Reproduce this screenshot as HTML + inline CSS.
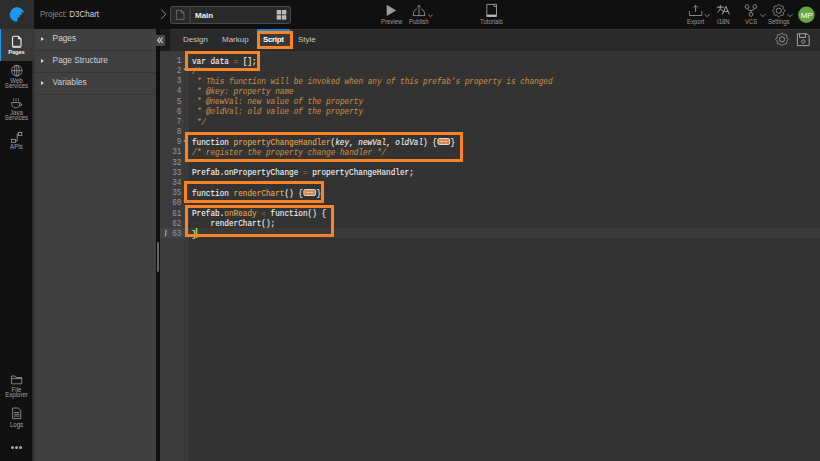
<!DOCTYPE html>
<html><head><meta charset="utf-8">
<style>
*{margin:0;padding:0;box-sizing:border-box}
html,body{width:820px;height:461px;overflow:hidden;background:#101010;font-family:"Liberation Sans",sans-serif;position:relative}
.a{position:absolute}
#top{left:0;top:0;width:820px;height:29px;background:#101010}
#side{left:0;top:0;width:33px;height:461px;background:#111111}
#logo{left:0;top:0;width:34px;height:29px;background:#2d2d2d}
#pagesItem{left:0;top:29px;width:34px;height:32px;background:#3a3a3a;border-left:1px solid #1a9cf0}
#panel{left:34px;top:29px;width:122px;height:432px;background:#404040;border-left:1px solid #3a3a3a}
#pedge{left:32px;top:61px;width:2px;height:400px;background:#2e2e2e}
.pi{position:absolute;left:0;width:122px;height:22px;border-bottom:1px solid #363636;color:#d2d2d2;font-size:8.3px}
.pi span.t{position:absolute;left:17.6px;top:4.2px;white-space:nowrap}
.pi span.tri{position:absolute;left:6px;top:8.3px;width:0;height:0;border-left:3.6px solid #d6d6d6;border-top:2.4px solid transparent;border-bottom:2.4px solid transparent}
#strip{left:156px;top:29px;width:4px;height:432px;background:#0f0f0f}
#handle{left:157px;top:242px;width:2px;height:30px;background:#666;border-radius:1px}
#collapse{left:156px;top:35px;width:9px;height:10.5px;background:#474747;z-index:5}
#tabbar{left:160px;top:29px;width:660px;height:22px;background:#2a2a2a;border-top:1px solid #363636}
#tabdark{left:160px;top:29px;width:10px;height:22px;background:#1b1b1b}
#code{left:160px;top:51px;width:660px;height:410px;background:#333333}
#gutter{left:160px;top:51px;width:29px;height:410px;background:#3b3b3b;border-right:0}
#gline{left:189px;top:51px;width:1px;height:410px;background:#303030}
.tab{position:absolute;top:35px;font-size:8px;color:#c8c8c8}
.lbl{position:absolute;font-size:6.8px;color:#9a9a9a;white-space:nowrap;transform:scaleX(0.88);transform-origin:left top}
.slbl{position:absolute;font-size:6.6px;color:#a2a2a2;text-align:center;width:33px;left:0;line-height:5.6px;transform:scaleX(0.92)}
.ln{position:absolute;left:150px;width:31.5px;text-align:right;font-family:"Liberation Mono",monospace;font-size:8.5px;line-height:10.2px;color:#8f9aa6;transform:scaleX(0.9078);transform-origin:right top}
.cl{-webkit-text-stroke:0.08px currentColor;position:absolute;left:191.5px;font-family:"Liberation Mono",monospace;font-size:8.5px;line-height:10.2px;color:#f8f8f8;white-space:pre;transform:scaleX(0.9057);transform-origin:left top}
.c{color:#c48a45;font-style:italic}
.o{color:#b06a2c}
.f{color:#e8a850}
.i{font-style:italic}
.box{position:absolute;border:3px solid #fb8326}
.ws{color:#474747;font-style:normal;-webkit-text-stroke:0}
.fold{display:inline-block;position:relative;width:15px;height:8px;vertical-align:-1px}
.fold span{position:absolute;left:0.8px;top:0;width:13.6px;height:7.4px;background:#cf8a4e;border:1px solid #e0e0e0;border-radius:2px}
.fold svg{position:absolute;left:1px;top:0.5px}
.cur{position:absolute;left:4.3px;top:-1.8px;width:2px;height:10.3px;background:#7fd320}
</style></head><body>
<div class="a" id="top"></div>
<div class="a" id="side"></div>
<div class="a" id="logo"></div>
<div class="a" id="pagesItem"></div>
<div class="a" id="pedge"></div>
<div class="a" id="panel">
  <div class="pi" style="top:0"><span class="tri"></span><span class="t">Pages</span></div>
  <div class="pi" style="top:22px"><span class="tri"></span><span class="t">Page Structure</span></div>
  <div class="pi" style="top:44px"><span class="tri"></span><span class="t">Variables</span></div>
</div>
<div class="a" id="strip"></div>
<div class="a" id="handle"></div>
<div class="a" id="collapse"></div>
<div class="a" id="tabbar"></div>
<div class="a" id="tabdark"></div>
<div class="a" id="code"></div>
<div class="a" id="gutter"></div>
<div class="a" id="gline"></div>

<!-- top bar text -->
<div class="a" style="left:40px;top:9px;font-size:8.5px;color:#8a8a8a;white-space:nowrap;transform:scaleX(0.94);transform-origin:left top">Project: <span style="color:#d6d6d6">D3Chart</span></div>


<!-- SIDEBAR ICONS -->
<svg class="a" style="left:0;top:0" width="33" height="29" viewBox="0 0 33 29">
  <path d="M16.8 21.8 A7.3 7.3 0 1 1 24 12.2 L20.9 13.1 Q21.8 13.6 22.1 14.5 L19.3 15.5 Q20 16 20.1 16.8 L17.4 17.9 Q18.6 19.5 16.8 21.8 Z" fill="#1d96ef"/>
</svg>
<svg class="a" style="left:0;top:29px" width="33" height="32" viewBox="0 0 33 32">
  <path d="M14 7.3 H18.3 L21 10 V16.6 Q21 18 19.7 18 H13.8 Q12.5 18 12.5 16.6 V8.8 Q12.5 7.3 14 7.3 Z" fill="none" stroke="#e8eef4" stroke-width="1.1"/>
  <path d="M18.3 7.3 V10 H21 Z" fill="#e8eef4" stroke="#e8eef4" stroke-width="0.6"/>
  <rect x="12.3" y="16.7" width="8.9" height="2" rx="0.8" fill="#c9d2da"/>
</svg>
<div class="slbl" style="top:48.6px;color:#f2f2f2;font-size:6.2px;font-weight:bold;letter-spacing:-0.1px">Pages</div>
<svg class="a" style="left:0;top:62px" width="33" height="16" viewBox="0 0 33 16">
  <g fill="none" stroke="#9d9d9d" stroke-width="0.8">
   <circle cx="16.8" cy="8.7" r="5.3"/>
   <ellipse cx="16.8" cy="8.7" rx="2.4" ry="5.3"/>
   <line x1="16.8" y1="3.4" x2="16.8" y2="14"/>
   <line x1="11.5" y1="8.7" x2="22.1" y2="8.7"/>
  </g>
</svg>
<div class="slbl" style="top:77.6px">Web<br>Services</div>
<svg class="a" style="left:0;top:96px" width="33" height="14" viewBox="0 0 33 14">
  <g fill="none" stroke="#a0a0a0" stroke-width="0.8">
   <path d="M13.6 2.2 V5.3 M16 2 V5.3 M18.4 2.2 V5.3" stroke-width="0.7"/>
   <path d="M11.5 6.5 H20 Q20 11.8 15.7 11.8 Q11.5 11.8 11.5 6.5 Z"/>
   <path d="M20 7.5 Q22.2 7.6 21.5 9.3 Q20.8 10.2 19.3 10"/>
  </g>
</svg>
<div class="slbl" style="top:109.5px">Java<br>Services</div>
<svg class="a" style="left:0;top:130px" width="33" height="14" viewBox="0 0 33 14">
  <g fill="none" stroke="#a3a3a3" stroke-width="0.8">
   <rect x="18.4" y="2.4" width="3.4" height="3"/>
   <rect x="11.4" y="9.3" width="4.2" height="3"/>
   <path d="M18.4 4 H17.2 V11 H15.6"/>
  </g>
</svg>
<div class="slbl" style="top:144.2px">APIs</div>
<svg class="a" style="left:0;top:373px" width="33" height="13" viewBox="0 0 33 13">
  <g fill="none" stroke="#a0a0a0" stroke-width="0.8">
   <path d="M11.4 3 H15 L16 4.5 H21.7 V10.8 H11.4 Z"/>
   <path d="M11.4 5.6 H21.7"/>
  </g>
</svg>
<div class="slbl" style="top:386.6px">File<br>Explorer</div>
<svg class="a" style="left:0;top:406px" width="33" height="14" viewBox="0 0 33 14">
  <g fill="none" stroke="#a0a0a0" stroke-width="0.8">
   <path d="M12.6 2 H18.2 L20.8 4.6 V12.6 H12.6 Z"/>
   <path d="M14 6.5 H19.4 M14 8.3 H19.4 M14 10.1 H19.4"/>
  </g>
</svg>
<div class="slbl" style="top:421.6px">Logs</div>
<svg class="a" style="left:0;top:444px" width="33" height="7" viewBox="0 0 33 7">
  <g fill="#a8acb0"><circle cx="12.5" cy="3.5" r="1.5"/><circle cx="16.5" cy="3.5" r="1.5"/><circle cx="20.5" cy="3.5" r="1.5"/></g>
</svg>

<!-- TOP BAR ICONS -->
<svg class="a" style="left:155px;top:0" width="140" height="29" viewBox="0 0 140 29">
  <path d="M6.3 9.6 L10.8 14.2 L6.3 18.8" fill="none" stroke="#8c8c8c" stroke-width="1"/>
  <rect x="15.5" y="6.5" width="120" height="17" rx="2" fill="#2a2a2a" stroke="#4a4a4a" stroke-width="1"/>
  <line x1="35" y1="6.5" x2="35" y2="23.5" stroke="#4a4a4a" stroke-width="1"/>
  <path d="M21.4 10.3 H26.4 L29 12.9 V19.4 H21.4 Z" fill="none" stroke="#777" stroke-width="0.8"/>
  <path d="M26.4 10.3 V12.9 H29" fill="none" stroke="#777" stroke-width="0.8"/>
  <rect x="121.7" y="10" width="4.4" height="4.4" fill="#bdbdbd"/>
  <rect x="126.9" y="10" width="4.4" height="4.4" fill="#bdbdbd"/>
  <rect x="121.7" y="15.2" width="4.4" height="4.4" fill="#bdbdbd"/>
  <rect x="126.9" y="15.2" width="4.4" height="4.4" fill="#bdbdbd"/>
</svg>
<div class="a" style="left:195px;top:10.5px;font-size:8px;font-weight:bold;color:#f0f0f0">Main</div>

<svg class="a" style="left:375px;top:0" width="70" height="29" viewBox="0 0 70 29">
  <path d="M11.7 4.8 L21.2 10.5 L11.7 16.1 Z" fill="#9a9a9a"/>
  <g fill="none" stroke="#a0a0a0" stroke-width="0.8">
    <path d="M38.2 15.6 Q38.4 9.6 41.8 8.9 M46.2 8.9 Q49.6 9.6 49.8 15.6 M37.8 15.6 H50.2"/>
    <path d="M44 5.4 V15.6 M42.2 7.2 L44 5.4 L45.8 7.2"/>
    <path d="M53.3 14.5 L55.5 16.7 L57.7 14.5"/>
  </g>
</svg>
<div class="lbl" style="left:380.5px;top:18px">Preview</div>
<div class="lbl" style="left:409px;top:18px">Publish</div>

<svg class="a" style="left:470px;top:0" width="40" height="29" viewBox="0 0 40 29">
  <g fill="none" stroke="#a0a0a0" stroke-width="0.9">
    <path d="M16.8 4.4 H26.5 V16.5 H16.8 Z"/>
    <path d="M24 4.4 V6.5 L26.5 6.5"/>
  </g>
  <rect x="16.8" y="14.6" width="9.7" height="2.2" fill="#b8b8b8"/>
</svg>
<div class="lbl" style="left:479.5px;top:18px">Tutorials</div>

<svg class="a" style="left:680px;top:0" width="140" height="29" viewBox="0 0 140 29">
  <g fill="none" stroke="#a0a0a0" stroke-width="0.8">
    <path d="M9.4 11 V15.5 H21.8 V11"/>
    <path d="M15.6 5.4 V12 M13.4 7.6 L15.6 5.4 L17.8 7.6"/>
    <path d="M24.7 14.2 L27.2 16.7 L29.7 14.2"/>
    <circle cx="67.1" cy="6.6" r="1.9"/>
    <circle cx="74.9" cy="6.6" r="1.9"/>
    <circle cx="71" cy="14.4" r="1.9"/>
    <path d="M67.6 8.4 Q68 10.5 71 10.6 Q74 10.5 74.4 8.4 M71 10.6 V12.5"/>
    <path d="M80.3 14.2 L82.8 16.7 L85.3 14.2"/>
    <path d="M107.5 14.2 L110 16.7 L112.5 14.2"/>
  </g>
  <g transform="translate(98.8 10.7)" fill="none" stroke="#a0a0a0" stroke-width="0.8">
    <path d="M0.00 -6.20 L0.59 -5.98 L1.08 -5.44 L1.48 -4.87 L1.88 -4.53 L2.40 -4.49 L3.08 -4.61 L3.81 -4.65 L4.38 -4.38 L4.65 -3.81 L4.61 -3.08 L4.49 -2.40 L4.53 -1.88 L4.87 -1.48 L5.44 -1.08 L5.98 -0.59 L6.20 -0.00 L5.98 0.59 L5.44 1.08 L4.87 1.48 L4.53 1.88 L4.49 2.40 L4.61 3.08 L4.65 3.81 L4.38 4.38 L3.81 4.65 L3.08 4.61 L2.40 4.49 L1.88 4.53 L1.48 4.87 L1.08 5.44 L0.59 5.98 L0.00 6.20 L-0.59 5.98 L-1.08 5.44 L-1.48 4.87 L-1.88 4.53 L-2.40 4.49 L-3.08 4.61 L-3.81 4.65 L-4.38 4.38 L-4.65 3.81 L-4.61 3.08 L-4.49 2.40 L-4.53 1.88 L-4.87 1.48 L-5.44 1.08 L-5.98 0.59 L-6.20 0.00 L-5.98 -0.59 L-5.44 -1.08 L-4.87 -1.48 L-4.53 -1.88 L-4.49 -2.40 L-4.61 -3.08 L-4.65 -3.81 L-4.38 -4.38 L-3.81 -4.65 L-3.08 -4.61 L-2.40 -4.49 L-1.88 -4.53 L-1.48 -4.87 L-1.08 -5.44 L-0.59 -5.98 L-0.00 -6.20 Z"/>
    <circle cx="0" cy="0" r="2.6"/>
  </g>
  <circle cx="126.4" cy="14.7" r="8.2" fill="#67a547"/>
</svg>
<div class="a" style="left:37px;top:0;width:1px;height:1px"></div>
<svg class="a" style="left:712px;top:0" width="22" height="18" viewBox="712 0 22 18">
  <g fill="none" stroke="#b0b0b0" stroke-width="0.9">
   <path d="M716.9 7.2 H723.8 M720.3 5 V8.5 Q719.6 11 717.3 12.4 M720.6 9 Q721.5 10.3 723 11"/>
   <path d="M722.4 14.4 L725.9 6.2 L729.4 14.4 M723.7 11.4 H728.1"/>
  </g>
</svg>
<div class="lbl" style="left:687px;top:18px">Export</div>
<div class="lbl" style="left:717px;top:18px">I18N</div>
<div class="lbl" style="left:745px;top:18px">VCS</div>
<div class="lbl" style="left:767.5px;top:18px">Settings</div>
<div class="a" style="left:798px;top:10.6px;width:17px;text-align:center;font-size:8px;color:#fff;letter-spacing:-0.2px">MP</div>

<!-- editor toolbar icons -->
<svg class="a" style="left:770px;top:29px" width="50" height="22" viewBox="0 0 50 22">
  <g transform="translate(12 10.3)" fill="none" stroke="#a8a8a8" stroke-width="0.8">
    <path d="M0.00 -6.30 L0.60 -6.08 L1.10 -5.54 L1.51 -4.97 L1.91 -4.62 L2.45 -4.58 L3.14 -4.70 L3.88 -4.72 L4.45 -4.45 L4.72 -3.88 L4.70 -3.14 L4.58 -2.45 L4.62 -1.91 L4.97 -1.51 L5.54 -1.10 L6.08 -0.60 L6.30 -0.00 L6.08 0.60 L5.54 1.10 L4.97 1.51 L4.62 1.91 L4.58 2.45 L4.70 3.14 L4.72 3.88 L4.45 4.45 L3.88 4.72 L3.14 4.70 L2.45 4.58 L1.91 4.62 L1.51 4.97 L1.10 5.54 L0.60 6.08 L0.00 6.30 L-0.60 6.08 L-1.10 5.54 L-1.51 4.97 L-1.91 4.62 L-2.45 4.58 L-3.14 4.70 L-3.88 4.72 L-4.45 4.45 L-4.72 3.88 L-4.70 3.14 L-4.58 2.45 L-4.62 1.91 L-4.97 1.51 L-5.54 1.10 L-6.08 0.60 L-6.30 0.00 L-6.08 -0.60 L-5.54 -1.10 L-4.97 -1.51 L-4.62 -1.91 L-4.58 -2.45 L-4.70 -3.14 L-4.72 -3.88 L-4.45 -4.45 L-3.88 -4.72 L-3.14 -4.70 L-2.45 -4.58 L-1.91 -4.62 L-1.51 -4.97 L-1.10 -5.54 L-0.60 -6.08 L-0.00 -6.30 Z"/>
    <circle cx="0" cy="0" r="2.6"/>
  </g>
  <g fill="none" stroke="#b0b0b0" stroke-width="0.9">
    <path d="M27.4 4.8 H37 L39.2 7 V16.6 H27.4 Z"/>
    <path d="M29.6 4.8 V8.5 H35.5 V4.8"/>
    <circle cx="33.3" cy="12.6" r="1.7" stroke-width="0.8"/>
  </g>
</svg>
<!-- collapse chevrons -->
<svg class="a" style="left:156px;top:35px;z-index:6" width="9" height="11" viewBox="0 0 9 11">
  <path d="M4 2.6 L1.7 5.2 L4 7.8 M6.6 2.6 L4.3 5.2 L6.6 7.8" fill="none" stroke="#c8d0d8" stroke-width="1.1"/>
</svg>

<div class="a" style="left:257px;top:29px;width:33px;height:20px;background:#393939"></div>
<div class="a" style="left:257px;top:29px;width:33px;height:2px;background:#1c84d4"></div>
<!-- tabs -->
<div class="tab" style="left:183px">Design</div>
<div class="tab" style="left:222px">Markup</div>
<div class="tab" style="left:263px;color:#fff;font-weight:bold;letter-spacing:-0.35px">Script</div>
<div class="tab" style="left:298px">Style</div>

<!-- line numbers -->
<!--CODE-->
<div class="a" style="left:160px;top:227.8px;width:29px;height:10px;background:#444"></div>
<div class="a" style="left:189px;top:227.8px;width:631px;height:10px;background:#3a3a3a"></div>
<div class="ln" style="top:55.90px">1</div>
<div class="cl" style="top:56.5px">var<span class="ws">·</span>data<span class="ws">·</span><span class="o">=</span><span class="ws">·</span>[];</div>
<div class="ln" style="top:66.08px">2</div>
<div class="cl" style="top:66.7px"><span class="c">/*</span></div>
<div class="ln" style="top:76.25px">3</div>
<div class="cl" style="top:76.8px"><span class="c"><span class="ws">·</span>*<span class="ws">·</span>This<span class="ws">·</span>function<span class="ws">·</span>will<span class="ws">·</span>be<span class="ws">·</span>invoked<span class="ws">·</span>when<span class="ws">·</span>any<span class="ws">·</span>of<span class="ws">·</span>this<span class="ws">·</span>prefab's<span class="ws">·</span>property<span class="ws">·</span>is<span class="ws">·</span>changed<span class="ws">·</span></span></div>
<div class="ln" style="top:86.43px">4</div>
<div class="cl" style="top:87.0px"><span class="c"><span class="ws">·</span>*<span class="ws">·</span>@key:<span class="ws">·</span>property<span class="ws">·</span>name</span></div>
<div class="ln" style="top:96.60px">5</div>
<div class="cl" style="top:97.2px"><span class="c"><span class="ws">·</span>*<span class="ws">·</span>@newVal:<span class="ws">·</span>new<span class="ws">·</span>value<span class="ws">·</span>of<span class="ws">·</span>the<span class="ws">·</span>property</span></div>
<div class="ln" style="top:106.78px">6</div>
<div class="cl" style="top:107.4px"><span class="c"><span class="ws">·</span>*<span class="ws">·</span>@oldVal:<span class="ws">·</span>old<span class="ws">·</span>value<span class="ws">·</span>of<span class="ws">·</span>the<span class="ws">·</span>property</span></div>
<div class="ln" style="top:116.95px">7</div>
<div class="cl" style="top:117.6px"><span class="c"><span class="ws">·</span>*/</span></div>
<div class="ln" style="top:127.13px">8</div>
<div class="cl" style="top:127.7px"></div>
<div class="ln" style="top:137.30px">9</div>
<div class="cl" style="top:137.9px">function<span class="ws">·</span><span class="f">propertyChangeHandler</span>(<span class="i">key</span>,<span class="ws">·</span><span class="i">newVal</span>,<span class="ws">·</span><span class="i">oldVal</span>)<span class="ws">·</span>{<span class="fold"><span><svg width="10" height="5" viewBox="0 0 10 5"><path d="M1.5 2.5 H8.5 M3 1.2 L1.5 2.5 L3 3.8 M7 1.2 L8.5 2.5 L7 3.8" fill="none" stroke="#f3d2ae" stroke-width="0.7"/></svg></span></span>}</div>
<div class="ln" style="top:147.47px">31</div>
<div class="cl" style="top:148.1px"><span class="c">/*<span class="ws">·</span>register<span class="ws">·</span>the<span class="ws">·</span>property<span class="ws">·</span>change<span class="ws">·</span>handler<span class="ws">·</span>*/</span></div>
<div class="ln" style="top:157.65px">32</div>
<div class="cl" style="top:158.2px"></div>
<div class="ln" style="top:167.83px">33</div>
<div class="cl" style="top:168.4px">Prefab.onPropertyChange<span class="ws">·</span><span class="o">=</span><span class="ws">·</span>propertyChangeHandler;</div>
<div class="ln" style="top:178.00px">34</div>
<div class="cl" style="top:178.6px"></div>
<div class="ln" style="top:188.18px">35</div>
<div class="cl" style="top:188.8px">function<span class="ws">·</span><span class="f">renderChart</span>()<span class="ws">·</span>{<span class="fold"><span><svg width="10" height="5" viewBox="0 0 10 5"><path d="M1.5 2.5 H8.5 M3 1.2 L1.5 2.5 L3 3.8 M7 1.2 L8.5 2.5 L7 3.8" fill="none" stroke="#f3d2ae" stroke-width="0.7"/></svg></span></span>}</div>
<div class="ln" style="top:198.35px">60</div>
<div class="cl" style="top:199.0px"></div>
<div class="ln" style="top:208.53px">61</div>
<div class="cl" style="top:209.1px">Prefab.<span class="f">onReady</span><span class="ws">·</span><span class="o">=</span><span class="ws">·</span>function()<span class="ws">·</span>{</div>
<div class="ln" style="top:218.70px">62</div>
<div class="cl" style="top:219.3px"><span class="ws">·</span><span class="ws">·</span><span class="ws">·</span><span class="ws">·</span>renderChart();</div>
<div class="ln" style="top:228.88px">63</div>
<div class="cl" style="top:229.5px">}<span class="cur"></span></div>
<!--/CODE-->
<svg class="a" style="left:160px;top:51px" width="30" height="200" viewBox="160 51 30 200">
  <path d="M183.4 68.4 L185.6 68.4 L184.5 70.2 Z" fill="#b8b8b8"/>
  <path d="M183.8 139.6 L185.6 141 L183.8 142.4 Z" fill="#a0a0a0"/>
  <path d="M165.3 229.8 Q167 230.6 165.6 232.6 Q166.8 233.6 165.2 236.3" fill="none" stroke="#c8c8c8" stroke-width="0.9"/>
</svg>
<div class="box" style="left:185px;top:51px;width:75px;height:20px"></div>
<div class="box" style="left:257px;top:31px;width:36px;height:18px"></div>
<div class="box" style="left:185px;top:132px;width:278px;height:30px"></div>
<div class="box" style="left:184px;top:181px;width:140px;height:22px"></div>
<div class="box" style="left:185px;top:205px;width:149px;height:32px"></div>

</body></html>
